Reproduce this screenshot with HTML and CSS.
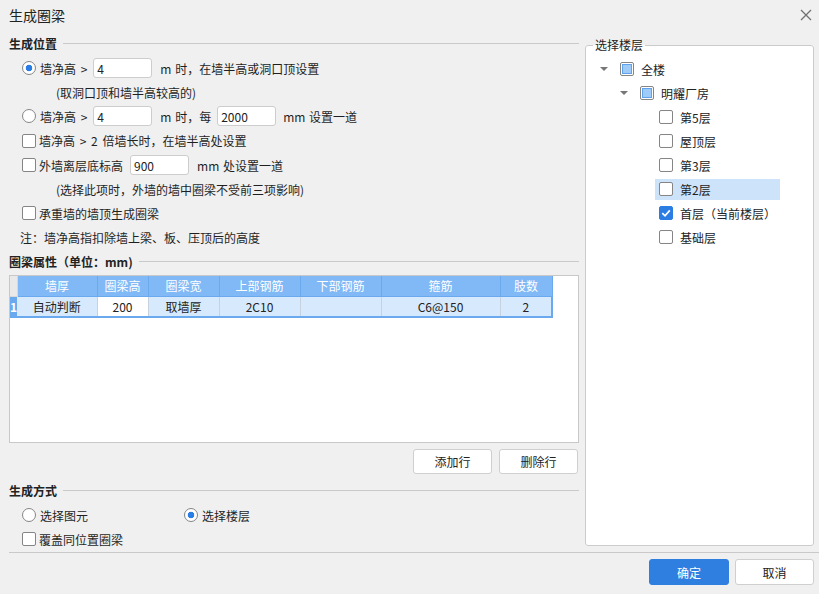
FILE: index.html
```html
<!DOCTYPE html>
<html lang="zh">
<head>
<meta charset="utf-8">
<title>生成圈梁</title>
<link rel="stylesheet" href="styles.css">
</head>
<body>
<div class="dialog">
  <div class="titlebar">
    <span class="title">生成圈梁</span>
    <svg class="close" width="12" height="12" viewBox="0 0 12 12"><path d="M1 1 L11 11 M11 1 L1 11" stroke="#707070" stroke-width="1.3" fill="none"/></svg>
  </div>
  <div class="main">
    <div class="left">
      <div class="sect">生成位置</div>
      <div class="rows">
        <div class="row ind-ctl"><span class="radio on"></span><span class="lbl">墙净高 &gt;</span><span class="inp i1">4</span><span class="after">m 时，在墙半高或洞口顶设置</span></div>
        <div class="row ind-note">(取洞口顶和墙半高较高的)</div>
        <div class="row ind-ctl"><span class="radio"></span><span class="lbl">墙净高 &gt;</span><span class="inp i1">4</span><span class="after">m 时，每</span><span class="inp i2">2000</span><span class="after2">mm 设置一道</span></div>
        <div class="row ind-ctl r4"><span class="cb"></span><span class="cbl">墙净高 &gt; 2 倍墙长时，在墙半高处设置</span></div>
        <div class="row ind-ctl"><span class="cb"></span><span class="cbl">外墙离层底标高</span><span class="inp i3">900</span><span class="after">mm 处设置一道</span></div>
        <div class="row ind-note">(选择此项时，外墙的墙中圈梁不受前三项影响)</div>
        <div class="row ind-ctl"><span class="cb"></span><span class="cbl">承重墙的墙顶生成圈梁</span></div>
        <div class="row ind-tip">注：墙净高指扣除墙上梁、板、压顶后的高度</div>
      </div>
      <div class="sect s2">圈梁属性（单位：mm)</div>
      <div class="tablebox">
        <table class="grid">
          <thead>
            <tr><th class="rn"></th><th class="c1">墙厚</th><th class="c2">圈梁高</th><th class="c3">圈梁宽</th><th class="c4">上部钢筋</th><th class="c5">下部钢筋</th><th class="c6">箍筋</th><th class="c7">肢数</th></tr>
          </thead>
          <tbody>
            <tr><td class="rn">1</td><td>自动判断</td><td class="edit">200</td><td>取墙厚</td><td>2C10</td><td></td><td>C6@150</td><td class="last">2</td></tr>
          </tbody>
        </table>
      </div>
      <div class="tbtns"><span class="btn">添加行</span><span class="btn">删除行</span></div>
      <div class="sect s3">生成方式</div>
      <div class="rows">
        <div class="row ind-ctl"><span class="opt"><span class="radio"></span><span class="lbl">选择图元</span></span><span class="radio on"></span><span class="lbl">选择楼层</span></div>
        <div class="row ind-ctl"><span class="cb"></span><span class="cbl">覆盖同位置圈梁</span></div>
      </div>
    </div>
    <fieldset class="right">
      <legend>选择楼层</legend>
      <div class="tree">
        <div class="node l0"><span class="arrow"></span><span class="cb part"><span></span></span><span class="tl">全楼</span></div>
        <div class="node l1"><span class="arrow"></span><span class="cb part"><span></span></span><span class="tl">明耀厂房</span></div>
        <div class="node l2"><span class="item"><span class="cb"></span><span class="tl">第5层</span></span></div>
        <div class="node l2"><span class="item"><span class="cb"></span><span class="tl">屋顶层</span></span></div>
        <div class="node l2"><span class="item"><span class="cb"></span><span class="tl">第3层</span></span></div>
        <div class="node l2"><span class="item sel"><span class="cb"></span><span class="tl">第2层</span></span></div>
        <div class="node l2"><span class="item"><span class="cb checked"><svg width="12" height="12" viewBox="0 0 12 12"><path d="M2.3 6.2 L5 8.8 L9.8 3.4" stroke="#fff" stroke-width="1.7" fill="none"/></svg></span><span class="tl">首层（当前楼层）</span></span></div>
        <div class="node l2"><span class="item"><span class="cb"></span><span class="tl">基础层</span></span></div>
      </div>
    </fieldset>
  </div>
  <div class="footer">
    <span class="btn primary">确定</span><span class="btn fb">取消</span>
  </div>
</div>
</body>
</html>
```

FILE: styles.css
```css
* { box-sizing: border-box; }
html, body { margin: 0; padding: 0; }
body {
  width: 819px;
  height: 594px;
  background: #f0f0f0;
  font-family: "Noto Sans CJK SC", "Microsoft YaHei", sans-serif;
  font-size: 12px;
  color: #1f1f1f;
  overflow: hidden;
}
.dialog { width: 819px; height: 594px; }
.titlebar {
  height: 30px;
  display: flex;
  align-items: center;
  justify-content: space-between;
  padding: 0 7px 0 9px;
}
.title { font-size: 14px; color: #222; }
.close { display: block; }
.main {
  height: 522px;
  display: flex;
  padding-left: 9px;
}
.left { width: 570px; display: flex; flex-direction: column; }
.sect {
  margin-top: 3px;
  height: 20px;
  display: flex;
  align-items: center;
  font-weight: bold;
  color: #222;
}
.sect::after {
  content: "";
  flex: 1;
  border-top: 1px solid #c9c9c9;
  margin-left: 6px;
}
.sect.s2 { margin-top: 2px; }
.sect.s3 { margin-top: 6px; }
.rows { padding-top: 3px; }
.row {
  height: 24px;
  display: flex;
  align-items: center;
  white-space: nowrap;
}
.row.r4 { height: 25px; }
.ind-ctl { padding-left: 13px; }
.ind-note { padding-left: 47px; }
.ind-tip { padding-left: 11px; }
.radio {
  width: 14px; height: 14px;
  border: 1px solid #858585;
  border-radius: 50%;
  background: #fff;
  flex: none;
}
.radio.on { background: radial-gradient(circle, #2a7de4 0 3px, #fff 3.6px); }
.lbl { margin-left: 4px; word-spacing: 2px; }
.cb {
  width: 14px; height: 14px;
  border: 1px solid #858585;
  border-radius: 2px;
  background: #fff;
  flex: none;
  display: inline-flex;
  align-items: center;
  justify-content: center;
}
.cbl { margin-left: 3px; word-spacing: 2px; }
.inp {
  height: 20px;
  width: 59px;
  background: #fff;
  border: 1px solid #cdcdcd;
  border-radius: 3px;
  padding-left: 3px;
  display: inline-flex;
  align-items: center;
  color: #222;
}
.inp.i1 { margin-left: 6px; }
.inp.i2 { margin-left: 6px; }
.inp.i3 { margin-left: 7px; }
.after { margin-left: 8px; word-spacing: 1px; }
.after2 { margin-left: 7px; word-spacing: 1px; }
.opt { display: inline-flex; align-items: center; width: 162px; }

.tablebox {
  margin-top: 4px;
  height: 168px;
  background: #fff;
  border: 1px solid #c8c8c8;
}
.grid {
  border-collapse: collapse;
  table-layout: fixed;
  width: 542px;
}
.grid th, .grid td {
  padding: 0;
  text-align: center;
  font-weight: normal;
  white-space: nowrap;
}
.grid th {
  height: 20px;
  background: #80b9f6;
  color: #fff;
  border-right: 1px solid #6aa9ed;
  border-bottom: 1px solid #6aa9ed;
}
.grid th.rn { background: #e9e9e9; border-color: #d8d8d8; width: 7px; }
.grid th.c1 { width: 80px; }
.grid th.c2 { width: 51px; }
.grid th.c3 { width: 71px; }
.grid th.c4 { width: 81px; }
.grid th.c5 { width: 81px; }
.grid th.c6 { width: 119px; }
.grid th.c7 { width: 52px; }
.grid td {
  height: 21px;
  background: #d7e9fc;
  border-right: 1px solid #c7d2de;
  border-bottom: 2px solid #6aa9ee;
  color: #222;
}
.grid td.rn { background: #6aa9ee; color: #fff; font-weight: bold; border-right: none; }
.grid td.edit { background: #fff; }
.grid td.last { border-right: 2px solid #6aa9ee; }

.tbtns {
  margin-top: 6px;
  display: flex;
  justify-content: flex-end;
  gap: 7px;
  padding-right: 1px;
}
.btn {
  width: 79px;
  height: 25px;
  display: inline-flex;
  align-items: center;
  justify-content: center;
  background: #fff;
  border: 1px solid #cfcfcf;
  border-radius: 3px;
  color: #222;
}

.right {
  margin: 6px 0 0 6px;
  padding: 0;
  width: 229px;
  height: 510px;
  border: 1px solid #cbcbcb;
  border-radius: 3px;
  background: #fff;
  min-inline-size: 0;
}
.right legend {
  margin-left: 7px;
  padding: 0 2px;
  line-height: 18px;
  font-size: 12px;
  color: #222;
}
.tree { padding-top: 3px; }
.node {
  height: 24px;
  display: flex;
  align-items: center;
}
.node.l0 { padding-left: 14px; }
.node.l1 { padding-left: 34px; }
.node.l2 { padding-left: 69px; }
.arrow {
  width: 0; height: 0;
  border-left: 4px solid transparent;
  border-right: 4px solid transparent;
  border-top: 4px solid #777;
  margin-right: 12px;
}
.cb.part { padding: 1px; }
.cb.part span {
  display: block;
  width: 100%; height: 100%;
  background: #9fcbf8;
  border: 1px solid #5fa1ea;
}
.cb.checked { background: #2b7de3; border-color: #2b7de3; }
.cb.checked svg { display: block; }
.tl { margin-left: 7px; color: #222; }
.item {
  display: flex;
  align-items: center;
  height: 21px;
  width: 125px;
  padding-left: 4px;
}
.item.sel { background: #cce3fa; }

.footer {
  margin-left: 9px;
  border-top: 1px solid #c9c9c9;
  padding-top: 6px;
  padding-right: 5px;
  display: flex;
  justify-content: flex-end;
  gap: 6px;
}
.footer .btn { height: 26px; }
.btn.primary {
  width: 80px;
  background: #2f7fe1;
  border-color: #2f7fe1;
  color: #fff;
}
```
